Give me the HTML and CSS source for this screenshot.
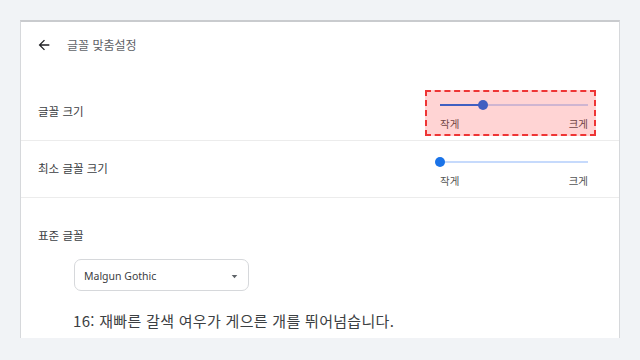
FILE: index.html
```html
<!DOCTYPE html>
<html lang="ko">
<head>
<meta charset="utf-8">
<link rel="stylesheet" href="styles.css">
</head>
<body>
<div class="card">
  <div class="header">
    <svg class="back" viewBox="0 0 24 24" width="16" height="16"><path d="M20 11H7.83l5.59-5.59L12 4l-8 8 8 8 1.41-1.41L7.83 13H20v-2z" fill="#202124"/></svg>
    <span class="title">글꼴 맞춤설정</span>
  </div>
  <div class="row row-first">
    <div class="label">글꼴 크기</div>
    <div class="slider">
      <div class="track"><div class="fill" style="width:43px"></div><div class="thumb" style="left:43px"></div></div>
      <div class="ticks"><span>작게</span><span>크게</span></div>
      <div class="highlight"></div>
    </div>
  </div>
  <div class="row">
    <div class="label">최소 글꼴 크기</div>
    <div class="slider">
      <div class="track"><div class="fill" style="width:0px"></div><div class="thumb" style="left:0px"></div></div>
      <div class="ticks"><span>작게</span><span>크게</span></div>
    </div>
  </div>
  <div class="section">
    <div class="label">표준 글꼴</div>
    <div class="select">
      <span>Malgun Gothic</span>
      <svg viewBox="0 0 10 10" width="7" height="7"><path d="M1 3h8L5 7.5z" fill="#5f6368"/></svg>
    </div>
    <div class="sample">16: 재빠른 갈색 여우가 게으른 개를 뛰어넘습니다.</div>
  </div>
</div>
</body>
</html>
```

FILE: styles.css
```css
* { box-sizing: border-box; }
html, body { margin: 0; padding: 0; }
body {
  background: #f1f3f6;
  width: 640px;
  height: 360px;
  overflow: hidden;
  font-family: "Noto Sans CJK KR", "Noto Sans", sans-serif;
  color: #3c4043;
}
.card {
  margin: 20px 0 0 20px;
  width: 600px;
  height: 318px;
  background: #fff;
  border-top: 2px solid #c9cbce;
  border-left: 1px solid #d6d8db;
  border-right: 1px solid #d6d8db;
  overflow: hidden;
}
.header {
  height: 46px;
  display: flex;
  align-items: center;
  padding-left: 15px;
}
.back { margin-right: 15px; }
.title {
  font-size: 12px;
  color: #5f6368;
  line-height: 16px;
}
.row {
  display: flex;
  justify-content: space-between;
  align-items: flex-start;
  height: 57px;
  padding: 14px 31px 0 17px;
  border-bottom: 1px solid #ececec;
}
.row-first {
  height: 73px;
  padding-top: 30px;
}
.label {
  font-size: 11.5px;
  line-height: 16px;
  margin-top: 5px;
  color: #3c4043;
}
.slider {
  position: relative;
  width: 148px;
}
.track {
  position: relative;
  height: 14px;
}
.track::before {
  content: "";
  position: absolute;
  left: 0; right: 0; top: 6px;
  height: 2px;
  background: #c6dafc;
}
.fill {
  position: absolute;
  left: 0; top: 6px;
  height: 2px;
  background: #1a73e8;
}
.thumb {
  position: absolute;
  top: 2px;
  width: 10px;
  height: 10px;
  margin-left: -5px;
  border-radius: 50%;
  background: #1a73e8;
}
.ticks {
  display: flex;
  justify-content: space-between;
  margin-top: 4px;
  font-size: 10.5px;
  line-height: 16px;
  color: #555;
}
.highlight {
  position: absolute;
  left: -15px;
  top: -8px;
  width: 171px;
  height: 46px;
  background: rgba(255, 0, 0, 0.17);
  border: 2px dashed #ee3535;
}
.section {
  padding: 29px 0 0 17px;
}
.section .label { margin-top: 0; }
.select {
  margin: 16px 0 0 36px;
  width: 175px;
  height: 32px;
  border: 1px solid #d6d8db;
  border-radius: 7px;
  display: flex;
  align-items: center;
  justify-content: space-between;
  padding: 2px 10px 0 9px;
  font-family: "Noto Sans", "Noto Sans CJK KR", sans-serif;
  font-size: 10.5px;
  color: #3c4043;
}
.sample {
  margin: 20px 0 0 35px;
  font-size: 15px;
  line-height: 20px;
  letter-spacing: 0.3px;
  color: #3c4043;
}
```
